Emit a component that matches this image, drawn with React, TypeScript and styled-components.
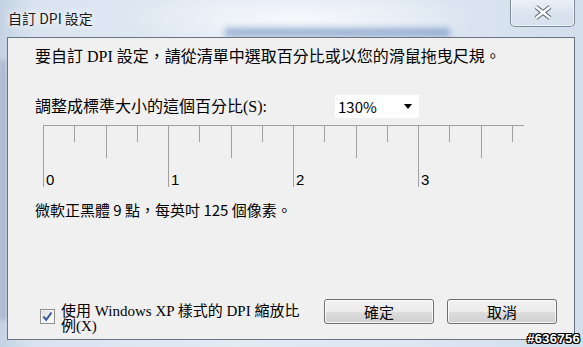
import styled, { createGlobalStyle } from "styled-components";

const GlobalStyle = createGlobalStyle`
  html, body {
    margin: 0;
    padding: 0;
    background: #d6e2ef;
  }
  * {
    box-sizing: border-box;
  }
`;

const font = `"Noto Sans CJK TC", "Liberation Sans", sans-serif`;
// MingLiU-like: serif latin with CJK fallback
const mingFont = `"Liberation Serif", "Noto Sans CJK TC", serif`;

const Window = styled.div`
  position: relative;
  width: 583px;
  height: 347px;
  overflow: hidden;
  display: flex;
  flex-direction: column;
  font-family: ${font};
  background:
    radial-gradient(ellipse 180px 30px at 300px 18px, rgba(255,255,255,0.7), rgba(255,255,255,0) 100%),
    linear-gradient(to right, #c4d2e3 0%, #d9e4f0 6%, #e2eaf4 40%, #dde7f2 70%, #d2deec 100%);

  &::before {
    content: "";
    position: absolute;
    left: 225px;
    top: 28px;
    width: 225px;
    height: 9px;
    background: #5d7fb8;
    opacity: 0.55;
    filter: blur(3px);
  }

  &::after {
    content: "";
    position: absolute;
    left: 0;
    top: 60px;
    width: 6px;
    height: 260px;
    background: #8a9bb4;
    opacity: 0.5;
    filter: blur(2px);
  }
`;

const TitleBar = styled.div`
  position: relative;
  z-index: 1;
  height: 37px;
  display: flex;
  justify-content: space-between;
  align-items: flex-start;
  padding: 0 8px 0 8px;
`;

const Title = styled.div`
  margin-top: 9px;
  font-size: 14px;
  line-height: 18px;
  color: #1a1a1a;
  text-shadow: 0 0 6px #fff, 0 0 10px #fff;
`;

const CloseButton = styled.div`
  width: 65px;
  height: 28px;
  margin-top: -1px;
  border: 1px solid #7f8b9b;
  border-top: none;
  border-radius: 0 0 5px 5px;
  background: linear-gradient(to bottom, rgba(255,255,255,0.55), rgba(230,237,246,0.35) 50%, rgba(215,225,238,0.5));
  box-shadow: inset 0 0 0 1px rgba(255,255,255,0.6);
  display: flex;
  align-items: center;
  justify-content: center;
`;

const Client = styled.div`
  position: relative;
  z-index: 1;
  margin: 0 8px 0 7px;
  height: 303px;
  border: 1px solid #6a7480;
  background: #f0f0f0;
  display: flex;
  flex-direction: column;
  padding: 10px 17px 5px 27px;
  color: #000;
`;

const Text = styled.div<{ $ming?: boolean; $size?: number }>`
  font-family: ${(p) => (p.$ming ? mingFont : font)};
  font-size: ${(p) => p.$size ?? 15}px;
  line-height: 18px;
  white-space: nowrap;
`;

const ScaleRow = styled.div`
  display: flex;
  align-items: center;
  margin-top: 29px;
  height: 23px;
`;

const ScaleLabel = styled(Text)`
  width: 300px;
`;

const Select = styled.div`
  width: 84px;
  height: 23px;
  background: #fff;
  display: flex;
  align-items: center;
  justify-content: space-between;
  padding: 0 7px 0 3px;
  font-size: 15px;
`;

const Arrow = styled.span`
  width: 0;
  height: 0;
  border-left: 4px solid transparent;
  border-right: 4px solid transparent;
  border-top: 5px solid #000;
`;

const RulerSvg = styled.svg`
  display: block;
  margin: 7px 0 0 8px;
`;

const Info = styled(Text)`
  margin-top: 12px;
`;

const Footer = styled.div`
  margin-top: auto;
  display: flex;
  align-items: flex-start;
`;

const CheckArea = styled.div`
  flex: 1;
  display: flex;
  align-items: flex-start;
  padding-left: 5px;
`;

const CheckBox = styled.div`
  width: 15px;
  height: 15px;
  margin-top: 10px;
  border: 1px solid #8f8f8f;
  background: linear-gradient(135deg, #dcdcdc, #f4f4f4 60%, #ffffff);
  box-shadow: inset 0 0 0 1px #f4f4f4;
  display: flex;
  align-items: center;
  justify-content: center;
`;

const CheckLabel = styled.div`
  margin-left: 6px;
  margin-top: 5px;
  font-family: ${mingFont};
  font-size: 15px;
  line-height: 15px;
`;

const Buttons = styled.div`
  display: flex;
  gap: 13px;
`;

const Button = styled.div`
  width: 110px;
  height: 25px;
  border: 1px solid #707070;
  border-radius: 3px;
  background: linear-gradient(to bottom, #f2f2f2 0%, #ebebeb 50%, #dddddd 51%, #cfcfcf 100%);
  box-shadow: inset 0 0 0 1px rgba(255,255,255,0.8);
  display: flex;
  align-items: center;
  justify-content: center;
  font-size: 15px;
  color: #000;
`;

const Watermark = styled.div`
  position: absolute;
  right: 3px;
  bottom: 1px;
  z-index: 2;
  font-family: "Liberation Sans", sans-serif;
  font-weight: bold;
  font-size: 13px;
  letter-spacing: 0.3px;
  color: #fff;
  text-shadow: 1px 0 0 #000, -1px 0 0 #000, 0 1px 0 #000, 0 -1px 0 #000,
    1px 1px 0 #000, -1px -1px 0 #000, 1px -1px 0 #000, -1px 1px 0 #000;
`;

const Ruler = () => {
  const ticks = Array.from({ length: 16 }, (_, i) => i);
  return (
    <RulerSvg width={484} height={64} viewBox="0 0 484 64">
      <line x1={0} y1={0.5} x2={481} y2={0.5} stroke="#a0a0a0" />
      {ticks.map((i) => {
        const x = Math.round(i * 31.25) + 0.5;
        const len = i % 4 === 0 ? 62 : i % 2 === 0 ? 33 : 17;
        return <line key={i} x1={x} y1={0} x2={x} y2={len} stroke="#a0a0a0" />;
      })}
      {[0, 1, 2, 3].map((n) => (
        <text
          key={n}
          x={Math.round(n * 125) + 3}
          y={60}
          fontSize={15}
          fontFamily="Liberation Sans, sans-serif"
          fill="#000"
        >
          {n}
        </text>
      ))}
    </RulerSvg>
  );
};

export default function App() {
  return (
    <>
      <GlobalStyle />
      <Window>
        <TitleBar>
          <Title>自訂 DPI 設定</Title>
          <CloseButton>
            <svg width="20" height="15" viewBox="0 0 20 15">
              <path d="M3 2 L17 13 M17 2 L3 13" stroke="#5b6472" strokeWidth="4.5" />
              <path d="M3 2 L17 13 M17 2 L3 13" stroke="#fff" strokeWidth="2.5" />
            </svg>
          </CloseButton>
        </TitleBar>
        <Client>
          <Text $ming $size={16}>要自訂 DPI 設定，請從清單中選取百分比或以您的滑鼠拖曳尺規。</Text>
          <ScaleRow>
            <ScaleLabel $ming $size={16}>調整成標準大小的這個百分比(S):</ScaleLabel>
            <Select>
              <span>130%</span>
              <Arrow />
            </Select>
          </ScaleRow>
          <Ruler />
          <Info>微軟正黑體 9 點，每英吋 125 個像素。</Info>
          <Footer>
            <CheckArea>
              <CheckBox>
                <svg width="11" height="11" viewBox="0 0 11 11">
                  <path d="M1.5 5.5 L4.2 8.8 L9.5 1.5" fill="none" stroke="#3b5a95" strokeWidth="2" />
                </svg>
              </CheckBox>
              <CheckLabel>
                使用 Windows XP 樣式的 DPI 縮放比
                <br />
                例(X)
              </CheckLabel>
            </CheckArea>
            <Buttons>
              <Button>確定</Button>
              <Button>取消</Button>
            </Buttons>
          </Footer>
        </Client>
        <Watermark>#636756</Watermark>
      </Window>
    </>
  );
}
